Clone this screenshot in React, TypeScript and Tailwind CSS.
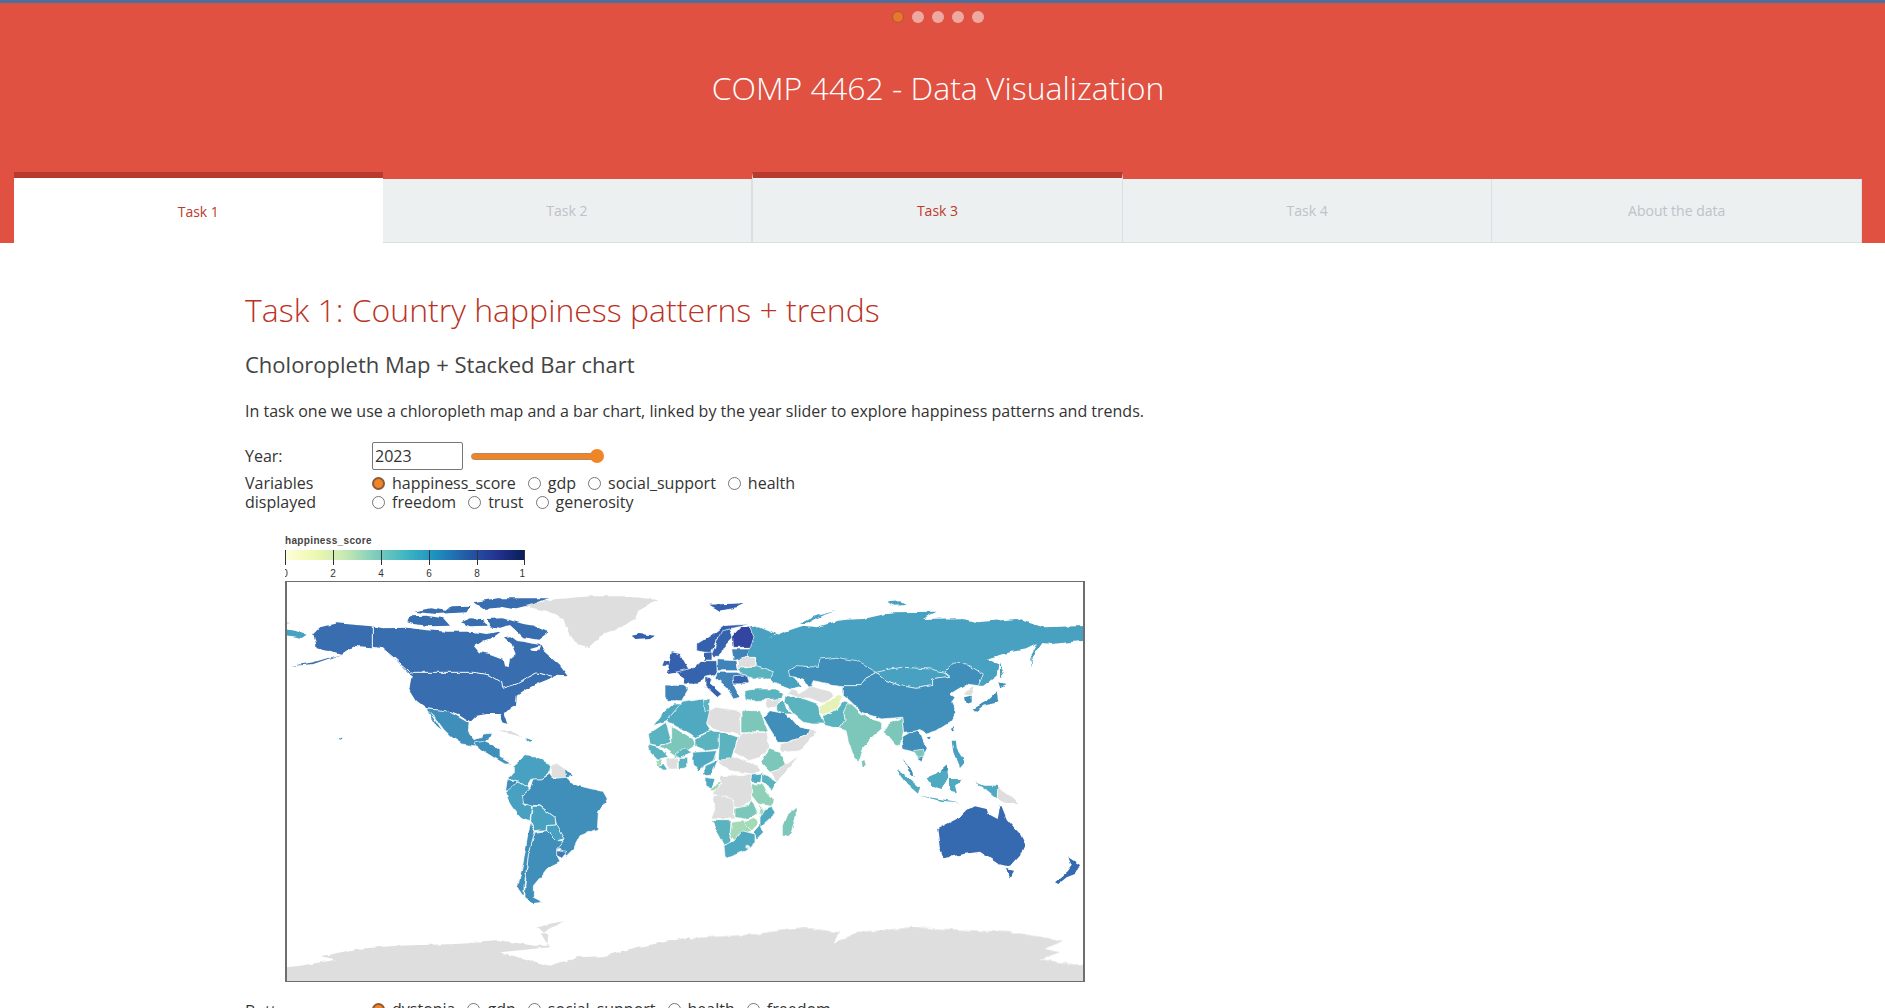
import React from "react";

const SANS = { fontFamily: '"Open Sans", "Liberation Sans", sans-serif' };

const C = {
  us: "#386eb0",
  nord: "#3560ad",
  fin: "#3044a0",
  eu: "#3664ad",
  b1: "#3f8fba",
  b2: "#48a1c1",
  b3: "#4fa9c0",
  t1: "#5cb3c0",
  t2: "#7cc7ba",
  g1: "#8fd0b8",
  g2: "#a4dab6",
  y: "#e4f2b8",
  gr: "#dedede",
};

function P({ d, f }: { d: string; f: string }) {
  return <polygon points={d} fill={f} stroke="#fff" strokeWidth={2} strokeLinejoin="round" />;
}

function N({ d, f }: { d: string; f: string }) {
  return <polygon points={d} fill={f} />;
}

function WorldMap() {
  return (
    <svg width={796} height={399} viewBox="287 583 796 399" className="block">
      <defs>
        <filter id="coast" filterUnits="userSpaceOnUse" x="260" y="560" width="850" height="450">
          <feTurbulence type="fractalNoise" baseFrequency="0.11" numOctaves={2} seed={4} result="n" />
          <feDisplacementMap in="SourceGraphic" in2="n" scale={4} xChannelSelector="R" yChannelSelector="G" />
        </filter>
      </defs>
      <g filter="url(#coast)">
        {/* Americas + west */}
        <g transform="translate(270 570) scale(0.33333)">
          <N f={C.gr} d="760,112 840,92 960,82 1070,82 1165,93 1105,125 1095,150 1060,170 1000,195 960,235 920,225 895,190 880,150 830,125" />
          <N f={C.us} d="610,100 680,88 835,88 790,105 730,120 700,115 640,120" />
          <N f={C.us} d="430,128 480,118 530,125 545,112 600,110 590,130 500,135" />
          <N f={C.us} d="412,160 420,142 470,140 520,148 540,170 480,172 430,165" />
          <N f={C.us} d="570,160 600,148 640,150 650,170 600,172" />
          <N f={C.us} d="650,150 700,148 760,165 790,170 835,190 805,212 760,205 720,168 690,176 660,172" />
          <N f={C.us} d="130,195 150,175 200,163 305,172 340,178 410,176 470,184 530,188 600,188 650,195 700,185 740,215 810,228 820,245 870,290 893,322 860,320 800,345 770,360 740,380 738,410 700,430 712,465 700,460 690,435 650,435 620,440 600,460 570,440 530,425 470,418 440,395 418,360 425,320 385,280 340,240 305,235 250,230 215,255 160,240 140,235" />
          <N f="#fff" d="615,232 640,215 670,205 690,190 705,172 735,182 730,200 702,205 725,225 737,255 720,270 716,295 705,290 700,270 660,255 630,250" />
          <N f="#fff" d="780,240 810,232 805,247 785,245" />
          <N f={C.us} d="60,292 130,280 215,255 180,268 130,285" />
          <polyline points="307,172 307,235 340,240 385,278 428,315" fill="none" stroke="#fff" strokeWidth={3} />
          <polyline points="428,310 610,310 660,318 695,340 698,358 740,345 775,325 800,312 850,322" fill="none" stroke="#fff" strokeWidth={3} />
          <N f={C.nord} d="1085,200 1110,195 1155,200 1140,210 1100,213" />
          <N f={C.b2} d="30,178 75,185 110,197 95,207 30,195" />
          <N f={C.b2} d="30,160 62,162 30,165" />
          <circle cx={211} cy={506} r={3} fill={C.b1} />
          <N f={C.gr} d="685,488 720,485 760,505 720,495" />
          <N f={C.b2} d="770,505 790,512 770,517" />
          <P f={C.b1} d="468,420 530,425 560,440 597,462 595,490 612,512 640,505 640,495 667,493 660,510 640,520 632,530 610,530 575,525 545,505 520,480 495,445" />
          <N f={C.b1} d="470,420 490,445 515,482 500,470 478,435" />
          <P f={C.b1} d="615,522 640,517 670,530 690,540 690,565 725,585 705,585 670,565 630,540" />
          <P f={C.b2} d="730,590 765,560 800,565 840,585 835,615 815,630 785,630 770,655 730,630 710,635 730,610" />
          <P f={C.gr} d="838,590 860,583 885,600 890,625 855,628 845,620" />
          <N f={C.b1} d="885,600 905,620 888,625" />
          <P f={C.b1} d="707,665 712,632 745,635 720,670" />
          <P f={C.b2} d="705,670 745,640 780,660 757,680 765,705 785,710 780,755 750,745 720,705" />
          <P f={C.b1} d="780,660 790,630 815,630 840,615 850,628 890,625 900,640 925,650 1000,668 1012,690 985,730 982,780 930,800 910,840 890,860 860,838 885,810 860,770 855,745 810,710 785,708 760,700 757,680" />
          <P f={C.b2} d="787,712 810,712 855,745 858,768 830,770 828,782 795,785 782,755" />
          <P f={C.b2} d="830,770 860,768 885,810 860,815 830,790" />
          <P f="#3a78b4" d="860,845 890,850 875,868 858,858" />
          <P f={C.b1} d="795,790 830,785 860,815 880,815 860,840 860,860 870,880 830,900 815,920 790,950 790,985 820,1000 790,1003 765,985 765,950 775,860" />
          <P f={C.b1} d="782,760 795,788 775,860 762,950 762,985 742,955 760,880 775,790" />
          <N f={C.gr} d="30,1265 30,1197 90,1190 200,1172 155,1162 260,1140 380,1130 560,1125 700,1115 790,1130 830,1130 835,1100 800,1075 880,1055 815,1095 840,1135 690,1150 840,1190 920,1165 1000,1162 1100,1135 1260,1105 1260,1265" />
        </g>

        {/* Africa, Europe, Asia */}
        <g transform="translate(630 570) scale(0.33333)">
          <N f={C.nord} d="238,107 345,103 320,115 270,125" />
          <N f={C.b2} d="360,230 372,205 360,175 385,172 440,195 415,208 460,190 490,180 520,170 560,175 625,155 650,152 700,150 790,130 920,128 875,150 990,148 1040,160 1160,150 1240,175 1390,170 1390,212 1265,225 1235,222 1205,265 1205,295 1200,260 1220,225 1190,240 1140,250 1070,270 1105,285 1100,320 1060,350 1045,350 1060,315 1010,285 970,282 945,310 900,300 820,295 780,300 740,310 700,290 660,275 620,265 570,270 565,295 500,290 475,305 490,325 515,350 480,360 430,340 420,330 430,308 380,290 378,265 350,265" />
          <N f={C.b2} d="510,165 560,140 620,125 575,140 530,165" />
          <N f={C.b2} d="770,100 810,97 830,108 790,110" />
          <P f={C.b1} d="475,305 500,290 565,295 570,270 620,265 680,275 740,310 710,325 690,350 640,350 600,345 550,335 540,360 520,330 480,325" />
          <P f={C.b2} d="740,310 780,300 820,295 900,300 945,310 960,322 905,330 905,350 860,358 810,350 770,335" />
          <P f={C.b1} d="640,350 690,350 710,325 740,310 770,335 810,350 860,358 905,350 905,330 960,322 945,310 970,282 1010,285 1060,315 1045,350 1010,345 960,375 975,385 965,400 980,430 960,460 920,485 890,495 870,485 820,490 815,445 755,450 695,430 660,395 640,380" />
          <P f={C.t2} d="650,405 665,405 690,430 720,450 755,458 755,480 725,505 700,540 685,580 672,565 655,515 648,485 625,478 645,450 640,430" />
          <P f={C.t2} d="760,490 775,465 815,445 820,490 810,530 795,525 775,500" />
          <P f={C.t1} d="580,440 620,420 640,395 655,400 640,430 645,450 625,478 590,470 575,465" />
          <P f={C.y} d="570,415 590,395 630,380 640,385 620,420 580,440 568,430" />
          <P f={C.t1} d="470,380 510,385 565,405 570,440 582,465 550,465 520,460 490,435 465,400" />
          <P f={C.gr} d="485,358 510,375 540,352 585,362 612,382 575,402 540,388 505,385 470,375" />
          <P f={C.t1} d="345,365 380,360 440,360 460,375 455,390 420,392 370,395 345,390" />
          <P f={C.gr} d="405,393 455,388 440,410 410,420" />
          <P f={C.t1} d="440,405 460,392 470,420 490,435 470,435 440,425" />
          <P f={C.b1} d="400,445 420,425 470,435 500,470 530,480 540,480 530,500 470,520 445,520 420,480" />
          <P f={C.gr} d="450,525 470,520 530,500 540,475 560,490 510,545 455,550" />
          <N f={C.t2} d="695,575 702,570 708,590 698,597" />
          {/* Africa */}
          <P f={C.t2} d="333,425 390,425 415,488 333,488" />
          <P f={C.gr} d="235,425 260,415 330,425 332,500 310,490 268,485 230,465" />
          <P f={C.b3} d="55,490 100,430 130,405 155,405 110,455 70,470" />
          <P f={C.b3} d="155,400 220,390 240,420 230,465 240,480 200,505 110,455" />
          <P f={C.t1} d="220,390 240,390 238,425 225,425" />
          <P f={C.t1} d="55,495 108,460 125,520 85,530 60,525" />
          <P f={C.t2} d="125,470 190,510 195,530 140,565 90,530 125,520" />
          <P f={C.t1} d="195,510 240,483 268,485 268,540 230,545 195,535" />
          <P f={C.t1} d="268,485 325,505 310,550 300,580 265,570 268,530" />
          <P f={C.gr} d="332,492 415,490 415,540 390,565 355,575 310,550 325,505" />
          <P f={C.t2} d="415,540 450,550 470,595 420,610 392,580" />
          <P f={C.gr} d="450,600 505,560 470,610 440,640 420,610" />
          <P f={C.gr} d="265,575 320,565 355,580 395,600 370,615 300,605" />
          <P f={C.b3} d="188,550 260,545 250,575 222,590 205,605 190,585" />
          <P f={C.gr} d="110,570 145,565 145,600 115,600" />
          <P f={C.t1} d="148,565 170,565 170,600 148,602" />
          <P f={C.t1} d="135,555 160,535 185,550 150,565" />
          <P f={C.t1} d="55,525 90,535 115,565 80,570 60,550" />
          <N f={C.g2} d="78,575 90,570 95,582 85,590" />
          <N f={C.t1} d="85,590 100,585 112,602 100,602" />
          <P f={C.b3} d="222,592 250,580 265,570 245,615 222,618" />
          <P f={C.b3} d="225,625 255,630 245,660 225,650" />
          <P f={C.g2} d="240,665 290,615 270,645 260,665" />
          <P f={C.gr} d="270,620 370,615 365,640 365,690 340,715 315,715 250,670 275,645" />
          <P f={C.gr} d="250,675 310,690 315,750 243,750 255,720" />
          <P f={C.b3} d="368,615 395,612 392,640 365,640" />
          <P f={C.t1} d="395,610 440,640 425,665 395,640" />
          <P f={C.g1} d="365,645 395,645 430,690 425,712 385,705 365,680" />
          <P f={C.t2} d="315,718 355,710 365,690 385,735 345,750 315,745" />
          <P f={C.g2} d="385,705 405,725 400,745 390,730" />
          <P f={C.b3} d="425,712 435,735 395,770 400,790 380,810 372,790 390,770 390,745 405,720" />
          <P f={C.g2} d="335,760 370,745 385,765 365,785 345,775" />
          <P f={C.g2} d="305,760 335,755 365,785 330,800 310,815 300,800" />
          <P f={C.t1} d="245,755 303,755 298,825 280,828 260,790" />
          <P f={C.b3} d="282,830 310,815 335,785 375,795 375,820 350,845 295,865 285,860" />
          <circle cx={352} cy={833} r={6} fill="#e8eeee" />
          <N f={C.t2} d="458,770 470,740 497,716 497,745 478,800 458,800" />
          {/* Europe */}
          <P f={C.nord} d="200,225 240,200 280,170 360,165 300,180 260,210 245,250 225,250 200,245" />
          <P f={C.eu} d="245,255 275,185 300,180 310,205 280,235 270,265 250,265" />
          <P f={C.fin} d="308,200 330,175 360,175 372,205 360,235 310,235" />
          <N f={C.nord} d="118,285 125,250 150,255 175,300 150,310 110,315" />
          <N f={C.nord} d="97,290 103,275 118,278 115,290" />
          <P f={C.eu} d="135,310 195,295 215,275 260,275 262,310 250,320 225,325 205,345 165,345 160,325" />
          <N f={C.eu} d="222,252 245,250 245,272 222,272" />
          <P f="#3f83b8" d="105,348 165,350 175,360 155,395 120,395 105,385" />
          <P f={C.eu} d="225,325 245,330 240,345 275,375 262,385 225,350" />
          <P f="#3f83b8" d="262,272 320,275 325,305 262,305" />
          <P f={C.t1} d="325,295 380,290 430,308 420,330 370,330 335,315" />
          <P f={C.gr} d="325,270 350,265 375,265 378,290 325,295" />
          <P f="#3f83b8" d="305,240 360,240 350,265 310,275" />
          <P f="#3f83b8" d="262,310 320,310 355,320 355,345 310,345 330,385 310,390 290,355 255,325" />
          <P f={C.eu} d="308,320 350,318 358,340 312,342" />
        </g>

        {/* East Asia + Oceania */}
        <g transform="translate(850 570) scale(0.33333)">
          <N f={C.b1} d="368,420 410,398 440,370 445,400 400,410 375,428" />
          <N f={C.b1} d="445,340 470,345 450,355" />
          <N f={C.b2} d="450,280 460,310 450,330" />
          <N f={C.b1} d="345,385 365,380 365,400 350,405" />
          <N f={C.gr} d="340,375 370,350 365,380" />
          <N f={C.b1} d="310,470 315,485 305,487" />
          <N f={C.b1} d="230,505 242,503 238,513" />
          <N f={C.b2} d="305,515 318,515 320,540 345,580 330,597 310,550" />
          <N f={C.b3} d="230,628 270,610 290,590 295,625 275,660 245,650" />
          <N f={C.b1} d="272,605 290,590 298,605" />
          <N f={C.b3} d="140,600 175,625 210,655 205,675 165,640" />
          <N f={C.b1} d="172,590 190,610 195,625 175,605" />
          <N f={C.b3} d="210,680 270,690 330,700 270,695" />
          <N f={C.b3} d="300,630 335,630 315,650 320,670 300,665" />
          <N f={C.b3} d="375,640 400,650 442,650 440,690 410,665" />
          <N f={C.gr} d="443,655 480,680 505,705 470,705 443,690" />
          <P f={C.b1} d="155,505 180,490 200,485 215,500 230,540 215,575 205,570 190,550 160,540" />
          <P f={C.t2} d="190,545 220,540 225,560 205,565" />
          <N f={C.b1} d="160,570 172,590 165,590" />
          <N f="#366bb0" d="262,780 330,745 350,725 375,712 410,720 415,735 443,750 452,705 470,750 510,795 525,825 510,860 480,893 445,885 415,865 390,848 340,855 280,868 270,840" />
          <N f="#366bb0" d="467,900 492,905 482,925" />
          <N f="#366bb0" d="615,940 650,910 665,890 655,865 690,888 675,915 650,925 625,945" />
        </g>

        {/* Antarctica east */}
        <g transform="translate(680 780) scale(0.33333)">
          <N f={C.gr} d="0,480 230,465 370,445 478,460 460,492 530,460 700,445 1000,460 1150,485 1095,510 1140,520 1080,540 1240,565 1240,640 0,640" />
        </g>
      </g>
    </svg>
  );
}

function Legend() {
  const ticks = [
    [0, "0"],
    [48, "2"],
    [96, "4"],
    [144, "6"],
    [192, "8"],
    [240, "10"],
  ] as const;
  return (
    <svg width={240} height={47} viewBox="0 0 240 47" className="block ml-[40px]">
      <defs>
        <linearGradient id="ygb" x1="0" x2="1" y1="0" y2="0">
          <stop offset="0" stopColor="#ffffd9" />
          <stop offset="0.125" stopColor="#edf8b1" />
          <stop offset="0.25" stopColor="#c7e9b4" />
          <stop offset="0.375" stopColor="#7fcdbb" />
          <stop offset="0.5" stopColor="#41b6c4" />
          <stop offset="0.625" stopColor="#1d91c0" />
          <stop offset="0.75" stopColor="#225ea8" />
          <stop offset="0.875" stopColor="#253494" />
          <stop offset="1" stopColor="#081d58" />
        </linearGradient>
      </defs>
      <text x={0} y={11} fontSize={10} fontWeight={700} fill="#444" fontFamily="Liberation Sans, sans-serif" letterSpacing={0.35}>
        happiness_score
      </text>
      <rect x={0} y={17} width={240} height={10} fill="url(#ygb)" />
      {ticks.map(([x, t]) => (
        <g key={x}>
          <line x1={x === 240 ? 239.5 : x + 0.5} x2={x === 240 ? 239.5 : x + 0.5} y1={17} y2={32} stroke="#333" strokeWidth={1} />
          <text x={x} y={44} fontSize={10} textAnchor="middle" fill="#333" fontFamily="Liberation Sans, sans-serif">
            {t}
          </text>
        </g>
      ))}
    </svg>
  );
}

function Radio({ label, on, className = "" }: { label: string; on?: boolean; className?: string }) {
  return (
    <span className={`inline-flex items-center gap-[7px] ${className}`}>
      {on ? (
        <span className="w-[13px] h-[13px] rounded-full bg-[#f08528] border-2 border-[#8a5a34] shrink-0" />
      ) : (
        <span className="w-[13px] h-[13px] rounded-full bg-white border border-[#767676] shrink-0" />
      )}
      <span>{label}</span>
    </span>
  );
}

function Tab({ label, active, marked }: { label: string; active?: boolean; marked?: boolean }) {
  if (active) {
    return (
      <div className="flex-1 h-[72px] border-t-[6px] border-[#b8392d] bg-white flex items-center justify-center text-[14px] text-[#c0392b] translate-y-px">
        {label}
      </div>
    );
  }
  if (marked) {
    return (
      <div className="flex-1 h-[71px] border-t-[6px] border-t-[#b8392d] border-b border-b-[#dcdfe2] border-r border-r-[#dcdfe2] border-l border-l-[#dcdfe2] bg-[#ecf0f1] flex items-center justify-center text-[14px] text-[#c0392b]">
        {label}
      </div>
    );
  }
  return (
    <div className="flex-1 h-[64px] border-b border-b-[#dcdfe2] border-r border-r-[#dcdfe2] bg-[#ecf0f1] flex items-center justify-center text-[14px] text-[#bdc3c7]">
      {label}
    </div>
  );
}

export default function App() {
  return (
    <div className="h-screen overflow-hidden bg-white text-[#333]" style={SANS}>
      <header className="h-[243px] bg-[#e05142] border-t-[3px] border-[#4c6f9c] flex flex-col">
        <div className="flex justify-center gap-[8px] pt-[8px] pr-[9px]">
          <span className="w-[12px] h-[12px] rounded-full bg-[#e8762c] border border-[#a85a30]" />
          <span className="w-[12px] h-[12px] rounded-full bg-[#efa8a0]" />
          <span className="w-[12px] h-[12px] rounded-full bg-[#efa8a0]" />
          <span className="w-[12px] h-[12px] rounded-full bg-[#efa8a0]" />
          <span className="w-[12px] h-[12px] rounded-full bg-[#efa8a0]" />
        </div>
        <h1 className="text-center text-white text-[32px] leading-[44px] font-light mt-[43px] pr-[9px]">COMP 4462 - Data Visualization</h1>
        <div className="mt-auto ml-[14px] mr-[23px] flex items-end">
          <Tab label="Task 1" active />
          <Tab label="Task 2" />
          <Tab label="Task 3" marked />
          <Tab label="Task 4" />
          <Tab label="About the data" />
        </div>
      </header>

      <main className="pl-[245px]">
        <h2 className="text-[32px] leading-[44px] font-light text-[#bb3325] mt-[45px]">Task 1: Country happiness patterns + trends</h2>
        <h3 className="text-[22px] leading-[32px] font-medium text-[#444] mt-[16px]">Choloropleth Map + Stacked Bar chart</h3>
        <p className="text-[16px] leading-[24px] text-[#333] mt-[19px]">
          In task one we use a chloropleth map and a bar chart, linked by the year slider to explore happiness patterns and trends.
        </p>

        <div className="flex items-center mt-[19px] h-[28px]">
          <div className="w-[127px] text-[16px]">Year:</div>
          <div className="w-[91px] h-[28px] border border-[#767676] rounded-[2px] text-[16px] leading-[26px] pl-[2px]">2023</div>
          <div className="w-[133px] ml-[8px] flex items-center">
            <div className="flex-1 h-[7px] rounded-full bg-[#f08528] border border-[#b08a6a]" />
            <div className="w-[14px] h-[14px] rounded-full bg-[#f08528] -ml-[7px]" />
          </div>
        </div>

        <div className="flex mt-[4px] text-[16px] leading-[19px]">
          <div className="w-[127px]">
            Variables
            <br />
            displayed
          </div>
          <div>
            <div className="flex">
              <Radio label="happiness_score" on />
              <Radio label="gdp" className="ml-[12px]" />
              <Radio label="social_support" className="ml-[12px]" />
              <Radio label="health" className="ml-[12px]" />
            </div>
            <div className="flex">
              <Radio label="freedom" />
              <Radio label="trust" className="ml-[12px]" />
              <Radio label="generosity" className="ml-[12px]" />
            </div>
          </div>
        </div>

        <div className="mt-[21px]">
          <Legend />
        </div>

        <div className="ml-[40px] mt-[1px] w-[800px] h-[401px] border-x-2 border-y border-[#6e6e6e]">
          <WorldMap />
        </div>

        <div className="flex mt-[16px] text-[16px] leading-[19px]">
          <div className="w-[127px] pt-[4px]">Bottom</div>
          <div className="flex">
            <Radio label="dystopia" on />
            <Radio label="gdp" className="ml-[12px]" />
            <Radio label="social_support" className="ml-[12px]" />
            <Radio label="health" className="ml-[12px]" />
            <Radio label="freedom" className="ml-[12px]" />
          </div>
        </div>
      </main>
    </div>
  );
}
